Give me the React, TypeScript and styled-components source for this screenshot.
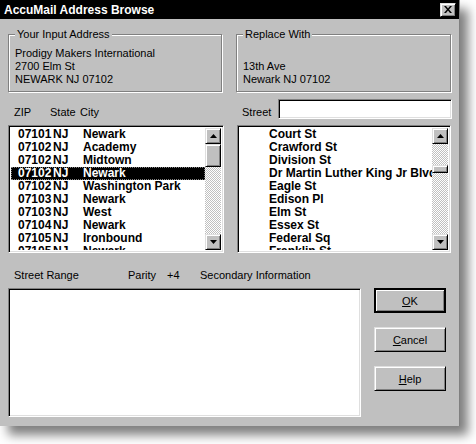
import React from "react";
import { createGlobalStyle, styled } from "styled-components";

const GlobalStyle = createGlobalStyle`
  body {
    margin: 0;
    background: #fff;
    font-family: "Liberation Sans", Arial, sans-serif;
    font-size: 11px;
    color: #000;
  }
`;

const cities = [
  ["07101", "NJ", "Newark"],
  ["07102", "NJ", "Academy"],
  ["07102", "NJ", "Midtown"],
  ["07102", "NJ", "Newark"],
  ["07102", "NJ", "Washington Park"],
  ["07103", "NJ", "Newark"],
  ["07103", "NJ", "West"],
  ["07104", "NJ", "Newark"],
  ["07105", "NJ", "Ironbound"],
  ["07105", "NJ", "Newark"],
];

const streets = [
  "Court St",
  "Crawford St",
  "Division St",
  "Dr Martin Luther King Jr Blvd",
  "Eagle St",
  "Edison Pl",
  "Elm St",
  "Essex St",
  "Federal Sq",
  "Franklin St",
];

const Arrow = ({ down }: { down?: boolean }) => (
  <svg width="7" height="4" viewBox="0 0 7 4">
    <path d={down ? "M0 0h7L3.5 4z" : "M3.5 0L7 4H0z"} fill="#000" />
  </svg>
);

const App = () => {
  return (
    <Page>
      <GlobalStyle />
      <Window>
        <TitleBar>
          <span>AccuMail Address Browse</span>
          <CloseButton>
            <svg width="8" height="7" viewBox="0 0 8 7">
              <path d="M0 0h2l2 2.5L6 0h2L5 3.5 8 7H6L4 4.5 2 7H0l3-3.5z" fill="#000" />
            </svg>
          </CloseButton>
        </TitleBar>
        <Body>
          <TopGrid>
            <GroupBox $width={214}>
              <Legend>Your Input Address</Legend>
              <div>Prodigy Makers International</div>
              <div>2700 Elm St</div>
              <div>NEWARK NJ 07102</div>
            </GroupBox>
            <GroupBox $width={215}>
              <Legend>Replace With</Legend>
              <div>&nbsp;</div>
              <div>13th Ave</div>
              <div>Newark NJ 07102</div>
            </GroupBox>

            <ColumnLabels>
              <span>ZIP</span>
              <span>State</span>
              <span>City</span>
            </ColumnLabels>
            <StreetRow>
              <FieldLabel>Street</FieldLabel>
              <TextInput />
            </StreetRow>

            <ListBox $width={216}>
              <Rows>
                {cities.map(([zip, st, city], i) => (
                  <CityRow key={i} $selected={i === 3}>
                    <span>{zip}</span>
                    <span>{st}</span>
                    <span>{city}</span>
                  </CityRow>
                ))}
              </Rows>
              <ScrollBar>
                <ScrollButton>
                  <Arrow />
                </ScrollButton>
                <Track>
                  <Thumb $offset={0} $size={23} />
                </Track>
                <ScrollButton>
                  <Arrow down />
                </ScrollButton>
              </ScrollBar>
            </ListBox>
            <ListBox $width={214} $shift={1}>
              <Rows>
                {streets.map((s) => (
                  <StreetItem key={s}>{s}</StreetItem>
                ))}
              </Rows>
              <ScrollBar>
                <ScrollButton>
                  <Arrow />
                </ScrollButton>
                <Track>
                  <Thumb $offset={21} $size={8} />
                </Track>
                <ScrollButton>
                  <Arrow down />
                </ScrollButton>
              </ScrollBar>
            </ListBox>
          </TopGrid>

          <RangeLabels>
            <span>Street Range</span>
            <span>Parity</span>
            <span>+4</span>
            <span>Secondary Information</span>
          </RangeLabels>

          <BottomRow>
            <InfoBox />
            <Buttons>
              <DialogButton $default>
                <u>O</u>K
              </DialogButton>
              <DialogButton>
                <u>C</u>ancel
              </DialogButton>
              <DialogButton>
                <u>H</u>elp
              </DialogButton>
            </Buttons>
          </BottomRow>
        </Body>
      </Window>
    </Page>
  );
};

const raised = `
  border: 1px solid;
  border-color: #dfdfdf #000 #000 #dfdfdf;
  box-shadow: inset 1px 1px 0 #fff, inset -1px -1px 0 #808080;
  background: #c0c0c0;
`;

const sunken = `
  border: 1px solid;
  border-color: #808080 #fff #fff #808080;
  box-shadow: inset 1px 1px 0 #000, inset -1px -1px 0 #dfdfdf;
  background: #fff;
`;

const Page = styled.div`
  width: 476px;
  height: 444px;
  overflow: hidden;
`;

const Window = styled.div`
  width: 459px;
  background: #c0c0c0;
  border-right: 1px solid #808080;
  box-shadow: 8px 9px 10px rgba(0, 0, 0, 0.5);
`;

const TitleBar = styled.div`
  height: 19px;
  background: #000;
  color: #fff;
  font-weight: bold;
  font-size: 12px;
  display: flex;
  align-items: center;
  justify-content: space-between;
  padding: 0 3px 0 4px;
`;

const CloseButton = styled.div`
  ${raised}
  box-sizing: border-box;
  width: 16px;
  height: 14px;
  display: flex;
  align-items: center;
  justify-content: center;
`;

const Body = styled.div`
  padding: 15px 0 9px 8px;
  display: flex;
  flex-direction: column;
`;

const TopGrid = styled.div`
  display: grid;
  grid-template-columns: 216px 216px;
  column-gap: 12px;
  align-items: start;
`;

const GroupBox = styled.div<{ $width: number }>`
  position: relative;
  box-sizing: border-box;
  width: ${(p) => p.$width}px;
  height: 58px;
  border: 1px solid #808080;
  box-shadow: 1px 1px 0 #fff, inset 1px 1px 0 #fff;
  padding: 12px 6px 0;
  line-height: 13px;
`;

const Legend = styled.span`
  position: absolute;
  top: -7px;
  left: 6px;
  padding: 0 2px;
  background: #c0c0c0;
  line-height: 13px;
`;

const ColumnLabels = styled.div`
  margin-top: 7px;
  height: 20px;
  display: grid;
  grid-template-columns: 36px 30px auto;
  align-items: end;
  padding-left: 6px;
  line-height: 13px;
`;

const StreetRow = styled.div`
  margin-top: 7px;
  height: 20px;
  display: flex;
  align-items: flex-end;
  padding-left: 6px;
`;

const FieldLabel = styled.span`
  width: 36px;
  line-height: 13px;
`;

const TextInput = styled.div`
  ${sunken}
  box-sizing: border-box;
  flex: 1;
  height: 20px;
`;

const ListBox = styled.div<{ $width: number; $shift?: number }>`
  ${sunken}
  margin-top: 6px;
  margin-left: ${(p) => p.$shift || 0}px;
  box-sizing: border-box;
  width: ${(p) => p.$width}px;
  height: 128px;
  padding: 2px;
  display: flex;
`;

const Rows = styled.div`
  flex: 1;
  min-width: 0;
  overflow: hidden;
  font-weight: bold;
  font-size: 12px;
`;

const CityRow = styled.div<{ $selected?: boolean }>`
  height: 13px;
  line-height: 13px;
  display: grid;
  grid-template-columns: 35px 30px auto;
  padding-left: 7px;
  white-space: nowrap;
  background: ${(p) => (p.$selected ? "#000" : "transparent")};
  color: ${(p) => (p.$selected ? "#fff" : "#000")};
  outline: ${(p) => (p.$selected ? "1px dotted #808080" : "none")};
  outline-offset: -1px;
`;

const StreetItem = styled.div`
  height: 13px;
  line-height: 13px;
  padding-left: 29px;
  white-space: nowrap;
`;

const ScrollBar = styled.div`
  width: 16px;
  display: flex;
  flex-direction: column;
`;

const ScrollButton = styled.div`
  ${raised}
  box-sizing: border-box;
  width: 16px;
  height: 16px;
  display: flex;
  align-items: center;
  justify-content: center;
`;

const Track = styled.div`
  flex: 1;
  background: repeating-conic-gradient(#c0c0c0 0 25%, #fff 0 50%) 0 0 / 2px 2px;
`;

const Thumb = styled.div<{ $offset: number; $size: number }>`
  ${raised}
  box-sizing: border-box;
  margin-top: ${(p) => p.$offset}px;
  height: ${(p) => p.$size}px;
`;

const RangeLabels = styled.div`
  height: 35px;
  box-sizing: border-box;
  padding: 16px 0 0 6px;
  display: grid;
  grid-template-columns: 114px 39px 33px auto;
  line-height: 13px;
`;

const BottomRow = styled.div`
  display: flex;
  gap: 13px;
`;

const InfoBox = styled.div`
  ${sunken}
  box-sizing: border-box;
  width: 353px;
  height: 129px;
`;

const Buttons = styled.div`
  display: flex;
  flex-direction: column;
  gap: 14px;
`;

const DialogButton = styled.div<{ $default?: boolean }>`
  ${raised}
  box-sizing: border-box;
  width: 72px;
  height: 25px;
  display: flex;
  align-items: center;
  justify-content: center;
  font-size: 11px;
  ${(p) =>
    p.$default &&
    `
    border: 2px solid #000;
    box-shadow: inset 1px 1px 0 #fff, inset -1px -1px 0 #808080;
  `}
`;

export default App;
